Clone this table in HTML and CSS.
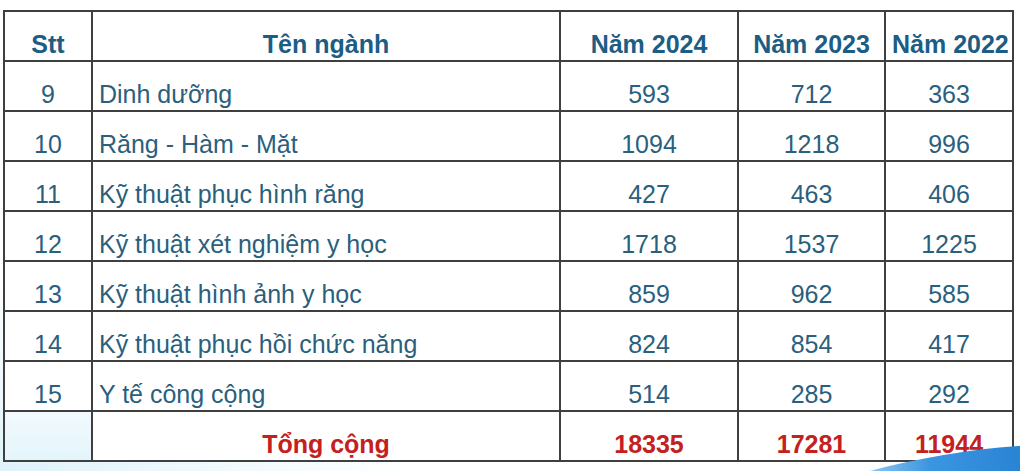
FILE: index.html
```html
<!DOCTYPE html>
<html lang="vi">
<head>
<meta charset="utf-8">
<link rel="stylesheet" href="styles.css">
</head>
<body>
<div class="slide">
  <table class="stats">
    <colgroup>
      <col class="c-stt"><col class="c-name"><col class="c-y1"><col class="c-y2"><col class="c-y3">
    </colgroup>
    <thead>
      <tr><th>Stt</th><th>Tên ngành</th><th>Năm 2024</th><th>Năm 2023</th><th>Năm 2022</th></tr>
    </thead>
    <tbody>
      <tr><td class="num">9</td><td class="name">Dinh dưỡng</td><td class="num">593</td><td class="num">712</td><td class="num">363</td></tr>
      <tr><td class="num">10</td><td class="name">Răng - Hàm - Mặt</td><td class="num">1094</td><td class="num">1218</td><td class="num">996</td></tr>
      <tr><td class="num">11</td><td class="name">Kỹ thuật phục hình răng</td><td class="num">427</td><td class="num">463</td><td class="num">406</td></tr>
      <tr><td class="num">12</td><td class="name">Kỹ thuật xét nghiệm y học</td><td class="num">1718</td><td class="num">1537</td><td class="num">1225</td></tr>
      <tr><td class="num">13</td><td class="name">Kỹ thuật hình ảnh y học</td><td class="num">859</td><td class="num">962</td><td class="num">585</td></tr>
      <tr><td class="num">14</td><td class="name">Kỹ thuật phục hồi chức năng</td><td class="num">824</td><td class="num">854</td><td class="num">417</td></tr>
      <tr><td class="num">15</td><td class="name">Y tế công cộng</td><td class="num">514</td><td class="num">285</td><td class="num">292</td></tr>
      <tr class="total"><td class="tint"></td><td class="num">Tổng cộng</td><td class="num">18335</td><td class="num">17281</td><td class="num">11944</td></tr>
    </tbody>
  </table>
  <svg class="swoosh" width="150" height="26" viewBox="0 0 150 26" aria-hidden="true">
    <defs>
      <linearGradient id="sw" x1="0" y1="0" x2="1" y2="0">
        <stop offset="0" stop-color="#8cc8f0"/>
        <stop offset="0.4" stop-color="#3b95e0"/>
        <stop offset="1" stop-color="#2a84d4"/>
      </linearGradient>
    </defs>
    <path d="M0 26 C 45 14, 100 4, 150 1 L150 26 Z" fill="url(#sw)"/>
  </svg>
</div>
</body>
</html>
```
FILE: styles.css
```css
html, body {
  margin: 0;
  padding: 0;
}
body {
  width: 1020px;
  height: 471px;
  overflow: hidden;
  background: radial-gradient(ellipse 420px 200px at 0 471px, #dff3fb 0%, #f3fafd 60%, #ffffff 100%);
  font-family: "Liberation Sans", Arial, sans-serif;
}
.slide {
  position: relative;
  width: 1020px;
  height: 471px;
  padding: 10px 0 0 3px;
  box-sizing: border-box;
}
.stats {
  border-collapse: collapse;
  table-layout: fixed;
  width: 1011px;
  background: transparent;
}
.c-stt { width: 88px; }
.c-name { width: 468px; }
.c-y1 { width: 178px; }
.c-y2 { width: 147px; }
.c-y3 { width: 128px; }
.stats th, .stats td {
  border: 2px solid #3f3f3f;
  height: 47px;
  padding: 0 6px 1px;
  vertical-align: bottom;
  font-size: 25px;
  line-height: 29px;
  white-space: nowrap;
  overflow: visible;
}
.stats tbody td { background: #ffffff; }
.stats th {
  color: #1c5d86;
  font-weight: bold;
  text-align: center;
  background: #ffffff;
}
.stats td {
  color: #2a5f7e;
}
.num { text-align: center; }
.name { text-align: left; padding-left: 7px; }
.total td {
  color: #c42020;
  font-weight: bold;
}
.stats tbody td.tint {
  background: linear-gradient(180deg, #f2fafd, #e3f5fb);
}
.swoosh {
  position: absolute;
  right: 0;
  bottom: 0;
}
```
